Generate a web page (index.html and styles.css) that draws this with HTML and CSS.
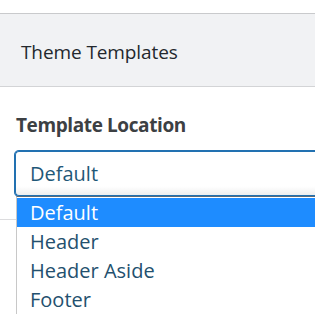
FILE: index.html
```html
<!DOCTYPE html>
<html lang="en">
<head>
<meta charset="utf-8">
<title>Theme Templates</title>
<link rel="stylesheet" href="styles.css">
</head>
<body>
<div class="page">
  <header class="panel">
    <h2 class="panel-title">Theme Templates</h2>
  </header>
  <section class="field">
    <label class="field-label">Template Location</label>
    <div class="select-wrap">
      <div class="select">Default</div>
      <ul class="listbox">
        <li class="option selected">Default</li>
        <li class="option">Header</li>
        <li class="option">Header Aside</li>
        <li class="option">Footer</li>
      </ul>
    </div>
    <hr class="sep">
  </section>
</div>
</body>
</html>
```

FILE: styles.css
```css
html, body {
  margin: 0;
  padding: 0;
  background: #fff;
  overflow: hidden;
}
.page {
  width: 315px;
  height: 314px;
  padding-top: 13px;
  box-sizing: border-box;
  overflow: hidden;
  font-family: "Open Sans", "Noto Sans", sans-serif;
}
.panel {
  border-top: 1px solid #c9cacc;
  border-bottom: 1px solid #d3d4d6;
  background: #f1f2f4;
  height: 74px;
  box-sizing: border-box;
  display: flex;
  align-items: center;
  padding: 3px 0 0 21px;
}
.panel-title {
  margin: 0;
  font-size: 19px;
  font-weight: 400;
  color: #23282d;
  letter-spacing: -0.1px;
}
.field {
  padding-left: 15px;
  padding-top: 25px;
}
.field-label {
  display: block;
  margin-left: 1px;
  font-size: 19px;
  font-weight: 700;
  color: #3c4043;
  letter-spacing: -0.4px;
  line-height: 26px;
  margin-bottom: 13px;
}
.select-wrap {
  position: relative;
  width: 300px;
  margin-right: -20px;
}
.select {
  height: 45px;
  box-sizing: border-box;
  border: 1px solid #2271b1;
  border-right: 0;
  box-shadow: -1px 0 0 0 #2271b1, 0 -1px 0 0 #2271b1, 0 1px 0 0 #2271b1;
  border-radius: 4px 0 0 4px;
  padding-left: 14px;
  display: flex;
  align-items: center;
  font-size: 20px;
  color: #1f5878;
  background: linear-gradient(#fff 80%, #eeeeee);
}
.listbox {
  position: absolute;
  left: 1px;
  top: 45px;
  right: 0;
  margin: 0;
  padding: 1px 0 0;
  list-style: none;
  background: #fff;
  border-left: 1px solid #c8c8c8;
  border-top: 1px solid #5a6a78;
}
.option {
  height: 29px;
  line-height: 29px;
  padding-left: 13px;
  font-size: 20px;
  color: #23506e;
}
.option.selected {
  background: #1e8cff;
  color: #fff;
}
.sep {
  margin: 23px 0 0 -15px;
  border: 0;
  border-top: 1px solid #dcdcde;
  width: 40px;
}
```
